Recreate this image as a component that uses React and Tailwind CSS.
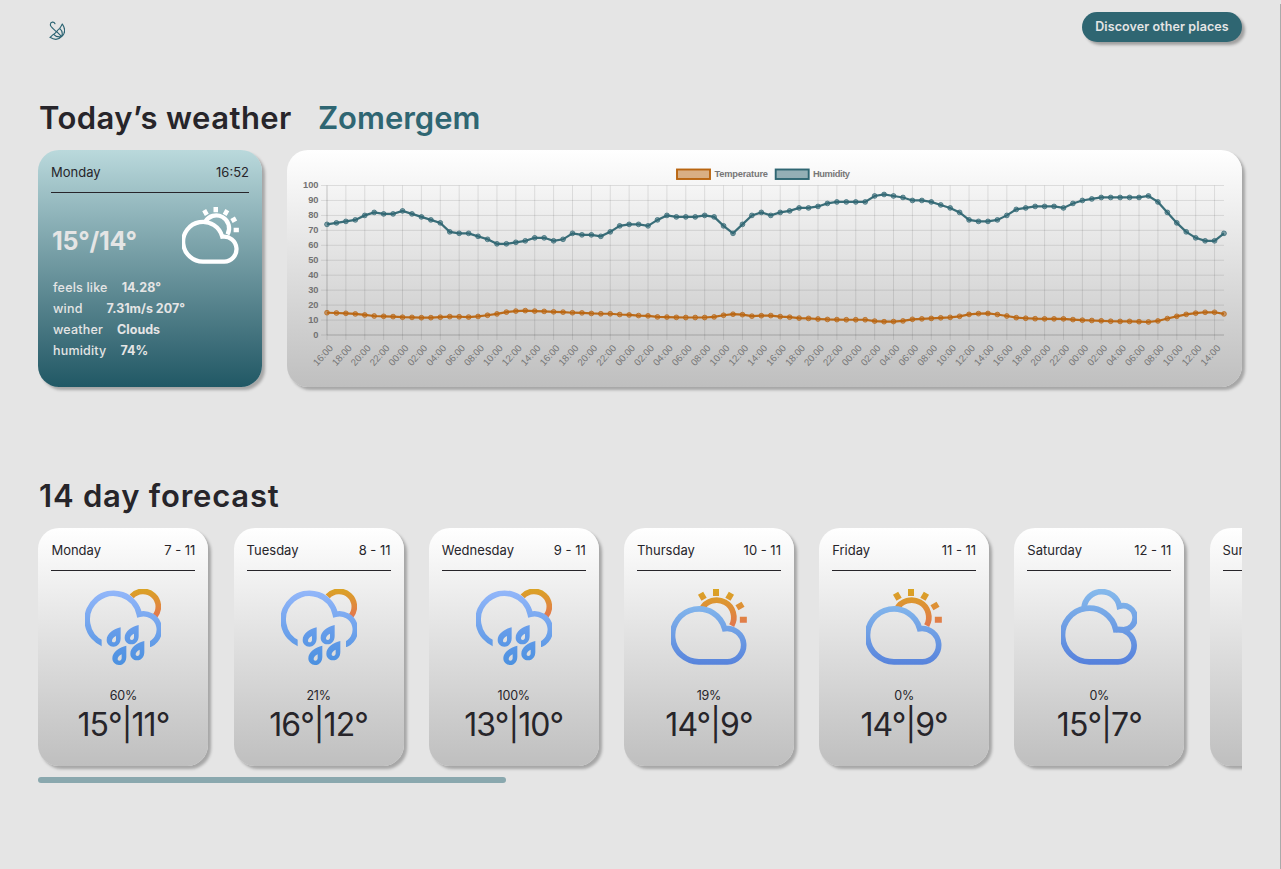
const humidity = [
  74, 75, 76, 77, 80, 82, 81, 81, 83, 81, 79, 77, 75, 69, 68, 68, 66, 64, 61, 61, 62, 63, 65, 65,
  63, 64, 68, 67, 67, 66, 69, 73, 74, 74, 73, 77, 80, 79, 79, 79, 80, 79, 73, 68, 74, 80, 82, 80,
  82, 83, 85, 85, 86, 88, 89, 89, 89, 89, 93, 94, 93, 92, 90, 90, 89, 87, 85, 82, 77, 76, 76, 77,
  80, 84, 85, 86, 86, 86, 85, 88, 90, 91, 92, 92, 92, 92, 92, 93, 89, 82, 75, 69, 65, 63, 63, 68,
];

const temperature = [
  14.9, 14.7, 14.5, 14.1, 13.4, 12.7, 12.5, 12.3, 11.9, 11.8, 11.6, 11.6, 11.9, 12.3, 12.2, 12,
  12.4, 13.2, 14.1, 15.3, 16, 16.3, 16, 15.8, 15.5, 15.3, 14.9, 14.8, 14.4, 14.2, 14.2, 13.7,
  13.4, 13, 12.8, 12.1, 12, 11.8, 11.7, 11.7, 11.7, 12.1, 13.2, 13.9, 13.6, 12.6, 12.9, 13,
  12.3, 11.9, 11.3, 11.1, 10.7, 10.4, 10.3, 10.2, 10.2, 10.2, 9.3, 8.9, 9, 9.4, 10.5, 10.8,
  11.1, 11.5, 11.8, 12.5, 13.8, 14.3, 14.4, 13.7, 12.7, 11.6, 11.2, 10.9, 10.8, 10.8, 10.8, 10.3,
  9.9, 9.7, 9.5, 9.2, 9.1, 9.1, 8.9, 8.7, 9.4, 11, 12.5, 13.8, 14.6, 15.2, 15.2, 14.1,
];

const forecast = [
  { day: "Monday", date: "7 - 11", icon: "rain", chance: "60%", temp: "15°|11°" },
  { day: "Tuesday", date: "8 - 11", icon: "rain", chance: "21%", temp: "16°|12°" },
  { day: "Wednesday", date: "9 - 11", icon: "rain", chance: "100%", temp: "13°|10°" },
  { day: "Thursday", date: "10 - 11", icon: "sun", chance: "19%", temp: "14°|9°" },
  { day: "Friday", date: "11 - 11", icon: "sun", chance: "0%", temp: "14°|9°" },
  { day: "Saturday", date: "12 - 11", icon: "clouds", chance: "0%", temp: "15°|7°" },
  { day: "Sunday" },
];

const X0 = 40;
const STEP = 897 / 95;
const px = (i) => X0 + i * STEP;
const py = (v) => 185 - v * 1.495;

function Series({ data, color }) {
  return (
    <g stroke={color} fill="none">
      <polyline strokeWidth="2.2" strokeOpacity="0.95" points={data.map((v, i) => `${px(i)},${py(v)}`).join(" ")} />
      {data.map((v, i) => (
        <circle key={i} cx={px(i)} cy={py(v)} r="2.4" strokeWidth="0.9" strokeOpacity="0.8" fill={color} fillOpacity="0.55" />
      ))}
    </g>
  );
}

function Chart() {
  const ticks = [0, 10, 20, 30, 40, 50, 60, 70, 80, 90, 100];
  const hours = Array.from({ length: 48 }, (_, i) => i);
  return (
    <svg className="block h-[237px] w-[955px] font-['Liberation_Sans',Arial,sans-serif]" viewBox="0 0 955 237">
      <g stroke="#000" strokeOpacity="0.1" strokeWidth="1">
        {ticks.map((t) => (
          <line key={t} x1="34" x2="937" y1={py(t)} y2={py(t)} />
        ))}
        {hours.map((h) => (
          <line key={h} x1={px(h * 2)} x2={px(h * 2)} y1="35.5" y2="190" />
        ))}
        <line x1="40" x2="40" y1="35.5" y2="185" />
        <line x1="40" x2="937" y1={py(0)} y2={py(0)} />
      </g>
      <g fill="#737373" className="text-[9.3px] font-bold" textAnchor="end">
        {ticks.map((t) => (
          <text key={t} x="31.5" y={py(t) + 2.6}>{t}</text>
        ))}
      </g>
      <g fill="#777" className="text-[9.7px]" textAnchor="end">
        {hours.map((h) => (
          <text key={h} transform={`translate(${px(h * 2) + 6.5},${198.5}) rotate(-48)`}>
            {`${String((16 + h * 2) % 24).padStart(2, "0")}:00`}
          </text>
        ))}
      </g>
      <Series data={humidity} color="#2f6672" />
      <Series data={temperature} color="#b96510" />
      <rect x="390" y="19.5" width="33" height="9.5" fill="#b96510" fillOpacity="0.5" stroke="#b96510" strokeWidth="1.9" />
      <rect x="488.7" y="19.5" width="33" height="9.5" fill="#2f6672" fillOpacity="0.5" stroke="#2f6672" strokeWidth="1.9" />
      <g fill="#777" className="text-[9.3px] font-bold">
        <text x="427.5" y="26.5" textLength="53.5">Temperature</text>
        <text x="526" y="26.5" textLength="37">Humidity</text>
      </g>
    </svg>
  );
}

const SUN_RAYS = [
  [94, 22, -30],
  [135, 10.5, 0],
  [176, 22, 30],
  [207, 51, 60],
  [217, 92, 90],
];

function SunCloud({ className, mono }) {
  const sun = mono ? "#fff" : "url(#sunHigh)";
  const cloud = mono ? "#fff" : "url(#cloudLow)";
  return (
    <svg className={className} viewBox="0 0 228 228" fill="none" strokeWidth="17">
      <path d="M92 60A51 51 0 0 1 182 110" stroke={sun} />
      <path
        d={SUN_RAYS.map(([x, y, a]) => {
          const r = (a * Math.PI) / 180;
          const dx = Math.sin(r) * 10.5;
          const dy = -Math.cos(r) * 10.5;
          return `M${x - dx} ${y - dy}L${x + dx} ${y + dy}`;
        }).join("")}
        stroke={sun}
        strokeWidth="18"
      />
      <path d="M86 218.5A79.5 79.5 0 1 1 161 119A50 50 0 1 1 169 218.5Z" stroke={cloud} />
    </svg>
  );
}

function Clouds({ className }) {
  return (
    <svg className={className} viewBox="0 0 228 228" fill="none" strokeWidth="17" stroke="url(#cloudFull)">
      <path d="M69 57A53.5 53.5 0 0 1 175 52A36 36 0 1 1 183 122H164" />
      <path d="M86 218.5A80.5 80.5 0 1 1 164 122A48.5 48.5 0 1 1 170 218.5Z" />
    </svg>
  );
}

const DROPS = [
  [0, 0],
  [54, -7],
  [17, 55],
  [71, 41],
];

function Rain({ className }) {
  return (
    <svg className={className} viewBox="0 0 228 228" fill="none" strokeWidth="17">
      <path d="M140 22A45.5 45.5 0 0 1 208 84" stroke="url(#sunRain)" />
      <clipPath id="rainCut">
        <path d="M0 0H228V175H195V110H50V175H0Z" />
      </clipPath>
      <path clipPath="url(#rainCut)" d="M56 165A79 79 0 1 1 163 76A46 46 0 0 1 188 168" stroke="url(#cloudRain)" />
      <path
        fill="url(#drops)"
        fillRule="evenodd"
        d={DROPS.map(
          ([x, y]) =>
            `M${107 + x} ${115 + y}c-21 5-42 19-42 38c0 12 9 20 20 20c15 0 22-12 22-25zm${-14} 26c-8 4-12 9-12 14c0 3 2 5 5 5c5 0 7-4 7-8z`
        ).join("")}
      />
    </svg>
  );
}

function Gradients() {
  const list = [
    ["sunHigh", "#daa522", "#e2764f", 0, 115],
    ["sunRain", "#daa324", "#e4764f", 0, 85],
    ["cloudLow", "#83b6ec", "#5783dc", 50, 228],
    ["cloudFull", "#86baec", "#5580dc", 0, 228],
    ["cloudRain", "#94b7fa", "#5f9ae6", 0, 175],
    ["drops", "#699eeb", "#4c91e0", 110, 228],
  ];
  return (
    <svg className="absolute size-0" aria-hidden="true">
      <defs>
        {list.map(([id, a, b, y1, y2]) => (
          <linearGradient key={id} id={id} gradientUnits="userSpaceOnUse" x1="0" x2="0" y1={y1} y2={y2}>
            <stop stopColor={a} />
            <stop offset="1" stopColor={b} />
          </linearGradient>
        ))}
      </defs>
    </svg>
  );
}

const ICONS = { rain: Rain, sun: SunCloud, clouds: Clouds };

function DayCard({ day, date, icon, chance, temp }) {
  const Icon = ICONS[icon];
  return (
    <article className="flex h-[238px] w-[170px] shrink-0 flex-col items-center rounded-[21px] bg-linear-to-b from-white to-[#bfbfbf] px-[13px] shadow-[3px_3px_3px_rgba(0,0,0,0.28)]">
      <header className="flex h-[42.5px] w-full shrink-0 justify-between border-b border-[#27252a] pt-3 text-[13px] leading-5">
        <span>{day}</span>
        <span>{date}</span>
      </header>
      {Icon && (
        <>
          <Icon className="mt-[18.5px] size-[76px] shrink-0" />
          <p className="mt-[21px] text-[12.5px] leading-5 tracking-[-0.2px]">{chance}</p>
          <p className="text-[32px] leading-[38px] tracking-[-0.9px]">{temp}</p>
        </>
      )}
    </article>
  );
}

function Detail({ label, value, gap }) {
  return (
    <div className={`flex h-[21px] items-center text-[12.5px] ${gap}`}>
      <dt className="font-medium tracking-[0.2px]">{label}</dt>
      <dd className="font-bold">{value}</dd>
    </div>
  );
}

export default function App() {
  return (
    <div className="flex h-[869px] w-[1281px] overflow-hidden bg-[#e5e5e5] font-[Inter,sans-serif] text-[#27252a]">
      <Gradients />
      <main className="flex w-[1280px] flex-col pl-[38px]">
        <nav className="flex h-[54px] w-[1204px] items-start justify-between pt-3">
          <svg className="mt-[9px] ml-[11px] h-[20px] w-[16px]" viewBox="0 0 48 60" fill="none" stroke="#2a6372" strokeWidth="3.4" strokeLinecap="round">
            <path d="M18 8C15 1 4 2 4 11C4 17 12 22 23 33M40 9C50 24 48 38 38 47C28 57 14 56 3 49C7 46 10 42 14 40C17 38 19 36 23 32C25 29 28 25 32 22C35 18 37 14 40 9M23 32L38 47M32 22C39 28 42 36 38 47M14 40C19 46 28 49 38 47" />
          </svg>
          <button className="h-[30px] w-[160px] rounded-full bg-[#2f6672] text-[12.5px] font-semibold tracking-[0.1px] whitespace-nowrap text-[#e5e5e5] shadow-[3px_3px_3px_rgba(0,0,0,0.3)]">
            Discover other places
          </button>
        </nav>

        <h1 className="mt-[44px] flex h-10 items-center gap-[26px] pl-px text-[31px] font-semibold whitespace-nowrap">
          <span className="tracking-[0.45px]">Today’s weather</span>
          <span className="text-[#2f6672]">Zomergem</span>
        </h1>

        <div className="mt-3 flex h-[237px] gap-[25px]">
          <section className="flex w-[224px] flex-col rounded-[21px] bg-linear-to-b from-[#bad9dc] to-[#205865] px-[13px] text-[#e5e5e5] shadow-[3px_3px_3px_rgba(0,0,0,0.28)]">
            <header className="flex h-[43px] shrink-0 justify-between border-b border-[#27252a] pt-3 text-[13px] leading-5 text-[#27252a]">
              <span>Monday</span>
              <span>16:52</span>
            </header>
            <div className="mt-3.5 flex h-[57px] items-center justify-between pr-[10px]">
              <p className="pt-3 pl-px text-[25px] font-bold tracking-[-0.2px]">15°/14°</p>
              <SunCloud className="size-[57px]" mono />
            </div>
            <dl className="mt-3.5 flex flex-col pl-0.5">
              <Detail label="feels like" value="14.28°" gap="gap-3.5" />
              <Detail label="wind" value="7.31m/s 207°" gap="gap-6" />
              <Detail label="weather" value="Clouds" gap="gap-3.5" />
              <Detail label="humidity" value="74%" gap="gap-3.5" />
            </dl>
          </section>
          <section className="w-[955px] rounded-[21px] bg-linear-to-b from-white to-[#bfbfbf] shadow-[3px_3px_3px_rgba(0,0,0,0.28)]">
            <Chart />
          </section>
        </div>

        <h2 className="mt-[89px] flex h-10 items-center pl-px text-[31px] font-semibold tracking-[0.8px] whitespace-nowrap">14 day forecast</h2>

        <div className="mt-3 flex h-[249px] w-[1204px] gap-[25.2px] overflow-hidden pl-[0.4px]">
          {forecast.map((d) => (
            <DayCard key={d.day} {...d} />
          ))}
        </div>
        <div className="h-1.5 w-[468px] rounded-full bg-[#8aa8ae]" />
      </main>
      <div className="mt-1 w-px bg-[#aaa]" />
    </div>
  );
}
